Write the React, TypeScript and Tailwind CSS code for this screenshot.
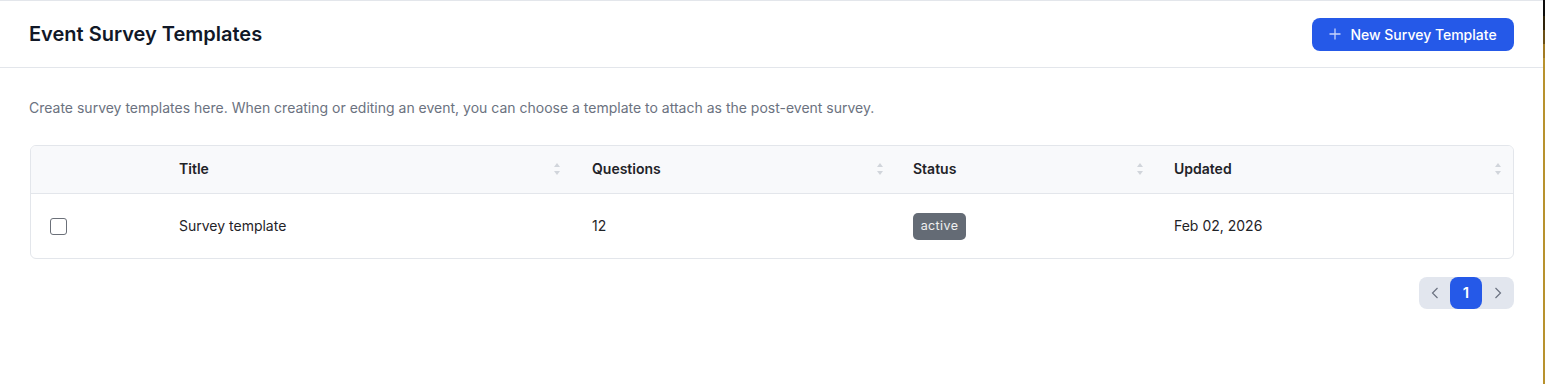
import React from "react";

function SortIcon() {
  return (
    <svg width="8" height="14" viewBox="0 0 8 14" className="shrink-0">
      <path d="M4 1 L7 5 L1 5 Z" fill="#d1d5db" />
      <path d="M4 13 L7 9 L1 9 Z" fill="#d1d5db" />
    </svg>
  );
}

export default function App() {
  return (
    <div className="flex w-[1545px] h-[384px] bg-white" style={{ fontFamily: "Inter, 'Noto Sans', sans-serif" }}>
      <div className="w-[1543px] shrink-0 flex flex-col">
        <div className="h-[68px] border-t border-b border-[#e3e6eb] flex items-center justify-between pl-[29px] pr-[29px]">
          <h1 className="text-[20px] font-semibold text-[#111827]">Event Survey Templates</h1>
          <button className="h-[33px] w-[202px] rounded-[8px] bg-[#2559e8] text-white text-[14px] font-medium flex items-center justify-center gap-[9px]">
            <svg width="12" height="12" viewBox="0 0 12 12">
              <path d="M6 0.5 V11.5 M0.5 6 H11.5" stroke="#c7d4fb" strokeWidth="1.3" />
            </svg>
            New Survey Template
          </button>
        </div>
        <div className="pl-[30px] pr-[29px]">
          <p className="pt-[30px] text-[14px] leading-[20px] text-[#6b7280] -ml-px">
            Create survey templates here. When creating or editing an event, you can choose a template to attach as the post-event survey.
          </p>
          <div className="mt-[27px] border border-[#e3e6eb] rounded-[6px] overflow-hidden">
            <div className="grid grid-cols-[132px_414px_321px_261px_1fr] h-[48px] bg-[#f8f9fb] border-b border-[#e3e6eb] text-[14px] font-semibold text-[#1f2328]">
              <div />
              <div className="flex items-center justify-between pl-[16px] pr-[16px] pb-[2px]"><span>Title</span><SortIcon /></div>
              <div className="flex items-center justify-between pl-[15px] pr-[14px] pb-[2px]"><span>Questions</span><SortIcon /></div>
              <div className="flex items-center justify-between pl-[15px] pr-[15px] pb-[2px]"><span>Status</span><SortIcon /></div>
              <div className="flex items-center justify-between pl-[15px] pr-[11px] pb-[2px]"><span>Updated</span><SortIcon /></div>
            </div>
            <div className="grid grid-cols-[132px_414px_321px_261px_1fr] h-[64px] text-[14px] text-[#1f2328]">
              <div className="flex items-center pl-[19px]">
                <div className="w-[17px] h-[17px] rounded-[3px] border border-[#6b7079] bg-white" />
              </div>
              <div className="flex items-center pl-[16px] pb-[2px]">Survey template</div>
              <div className="flex items-center pl-[15px] pb-[2px]">12</div>
              <div className="flex items-center pl-[15px]">
                <span className="h-[27px] w-[53px] rounded-[5px] bg-[#646b75] text-white/90 text-[12.5px] flex items-center justify-center tracking-[0.4px]">active</span>
              </div>
              <div className="flex items-center pl-[15px] pb-[2px]">Feb 02, 2026</div>
            </div>
          </div>
          <div className="mt-[18px] flex justify-end">
            <div className="flex items-center h-[32px] w-[95px] rounded-[8px] bg-[#e2e6ee]">
              <div className="w-[31px] flex justify-center">
                <svg width="8" height="12" viewBox="0 0 8 12"><path d="M6.5 1 L1.5 6 L6.5 11" fill="none" stroke="#6b7280" strokeWidth="1.2" /></svg>
              </div>
              <div className="w-[32px] h-[32px] rounded-[8px] bg-[#2559e8] text-white text-[15px] font-semibold flex items-center justify-center">1</div>
              <div className="w-[32px] flex justify-center">
                <svg width="8" height="12" viewBox="0 0 8 12"><path d="M1.5 1 L6.5 6 L1.5 11" fill="none" stroke="#6b7280" strokeWidth="1.2" /></svg>
              </div>
            </div>
          </div>
        </div>
      </div>
      <div className="w-[2px] shrink-0 flex flex-col">
        <div className="h-[16px] bg-[#0d0d0d]" />
        <div className="h-[14px] bg-[#2e230b]" />
        <div className="h-[14px] bg-[#6b5016]" />
        <div className="h-[14px] bg-[#a27b24]" />
        <div className="flex-1 bg-[#b8922e]" />
      </div>
    </div>
  );
}
